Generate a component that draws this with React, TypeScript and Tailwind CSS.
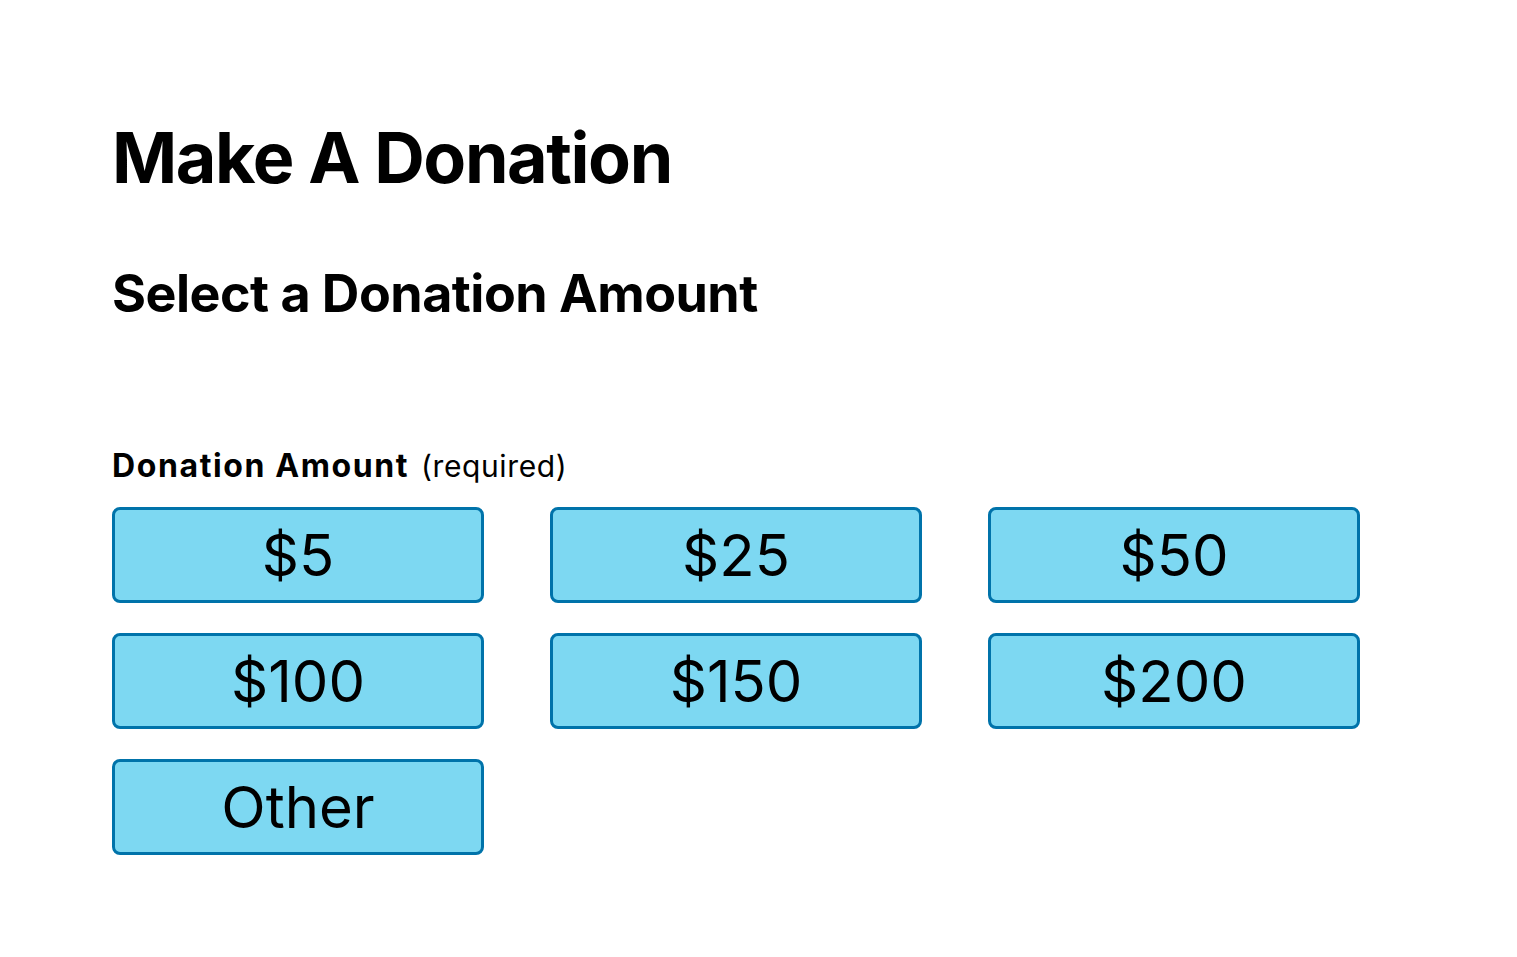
import React from "react";

const amounts = ["$5", "$25", "$50", "$100", "$150", "$200", "Other"];

export default function App() {
  return (
    <div className="min-h-screen bg-white text-black pl-[112px] pt-[118px]" style={{ fontFamily: "Inter, 'Noto Sans', sans-serif" }}>
      <h1 className="text-[70px] font-bold leading-[80px] tracking-[-0.02em]">Make A Donation</h1>
      <h2 className="mt-[66px] text-[52px] font-bold leading-[60px] tracking-[-0.01em]">Select a Donation Amount</h2>
      <div className="mt-[119px] flex items-baseline gap-[12px] leading-[46px]">
        <span className="text-[32px] font-bold tracking-[0.05em]">Donation Amount</span>
        <span className="text-[30px] font-normal tracking-[0.02em]">(required)</span>
      </div>
      <div className="mt-[18px] grid grid-cols-[372px_372px_372px] gap-x-[66px] gap-y-[30px]">
        {amounts.map((a) => (
          <button
            key={a}
            className="h-[96px] rounded-[8px] border-[3px] border-[#0073aa] bg-[#7dd8f2] text-[58px] font-normal text-black flex items-center justify-center"
          >
            {a}
          </button>
        ))}
      </div>
    </div>
  );
}
